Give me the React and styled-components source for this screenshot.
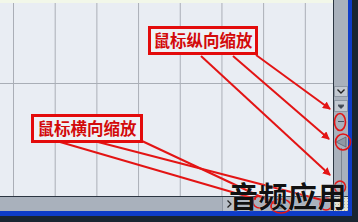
import React from "react";
import styled, { createGlobalStyle } from "styled-components";

const GlobalStyle = createGlobalStyle`
  html, body { margin: 0; padding: 0; }
  body { background: #1b2733; }
`;

const Window = styled.div`
  position: relative;
  width: 358px;
  height: 222px;
  box-sizing: border-box;
  padding: 0 6px 6px 0;
  background: #192531;
  overflow: hidden;
  font-family: "Noto Sans CJK SC", "Noto Sans", sans-serif;
`;

const Frame = styled.div`
  height: 100%;
  box-sizing: border-box;
  border-right: 4px solid #0e3cc8;
  border-bottom: 5px solid #0e3cc8;
  display: grid;
  grid-template-columns: 1fr 15px;
  grid-template-rows: 1fr 15px;
`;

const Canvas = styled.div`
  border-top: 3px solid #f2f7e9;
  background-color: #e9edf3;
  background-image:
    linear-gradient(to bottom, transparent 80px, #a9aeb6 80px, #a9aeb6 81px, transparent 81px),
    linear-gradient(to right, #aaaeb6 1px, transparent 1px);
  background-size: 100% 100%, 41.7px 100%;
  background-position: 0 0, 13px 0;
  background-repeat: no-repeat, repeat-x;
`;

const VScroll = styled.div`
  border-left: 1px solid #2c3642;
  background: #a9b1bc;
  display: flex;
  flex-direction: column;
  align-items: stretch;
  padding-top: 86px;
`;

const ScrollBtn = styled.div`
  height: ${({ h }) => h}px;
  margin-bottom: ${({ gap }) => gap || 0}px;
  background: #c3c9d1;
  border: 1px solid #8d96a2;
  box-sizing: border-box;
  display: flex;
  align-items: center;
  justify-content: center;
`;

const MinusMark = styled.div`
  height: 1px;
  width: 6px;
  margin: 9px auto 14px;
  background: #4a5360;
`;

const Track = styled.div`
  flex: 1;
  display: flex;
  flex-direction: column;
  align-items: center;
`;

const TrackLine = styled.div`
  flex: 1;
  width: 1px;
  background: #7c8591;
`;

const HScroll = styled.div`
  border-top: 1px solid #2c3642;
  background: #a9b1bc;
  display: flex;
  align-items: stretch;
  padding-left: 222px;
`;

const NavBtn = styled.div`
  width: 12px;
  background: #b9c0c9;
  border-left: 1px solid #8d96a2;
  display: flex;
  align-items: center;
  justify-content: center;
`;

const Tick = styled.div`
  width: 3px;
  margin-top: 8px;
  background: #ffffff;
`;

const Corner = styled.div`
  border-top: 1px solid #2c3642;
  border-left: 1px solid #2c3642;
  background: #e6e2d2;
  background-image: radial-gradient(#b6ad93 0.8px, transparent 1px);
  background-size: 3px 3px;
`;

const Label = styled.div`
  position: absolute;
  left: ${({ x }) => x}px;
  top: ${({ y }) => y}px;
  width: ${({ w }) => w}px;
  height: 29px;
  box-sizing: border-box;
  border: 3px solid #e30b0b;
  background: #eef1f5;
  color: #d30a0a;
  font-weight: 700;
  font-size: 16.5px;
  line-height: 23px;
  text-align: center;
  white-space: nowrap;
`;

const Watermark = styled.div`
  position: absolute;
  left: 229px;
  top: 179px;
  font-size: 29px;
  font-weight: 700;
  color: #111;
  letter-spacing: 0.5px;
  line-height: 32px;
  text-shadow: 0 0 1px #fff;
`;

const Overlay = styled.svg`
  position: absolute;
  left: 0;
  top: 0;
  pointer-events: none;
`;

const red = "#e31414";

export default function App() {
  return (
    <>
      <GlobalStyle />
      <Window>
        <Frame>
          <Canvas />
          <VScroll>
            <ScrollBtn h={11} gap={3}>
              <svg width="8" height="5" viewBox="0 0 8 5">
                <path d="M0.5 0.5 L4 4 L7.5 0.5" fill="none" stroke="#222" strokeWidth="1.4" />
              </svg>
            </ScrollBtn>
            <ScrollBtn h={12}>
              <svg width="6" height="5" viewBox="0 0 6 5">
                <path d="M0 0 H6 M0 1.5 L3 4.5 L6 1.5 Z" fill="#3c4450" stroke="#3c4450" strokeWidth="0.8" />
              </svg>
            </ScrollBtn>
            <MinusMark />
            <Track>
              <svg width="12" height="12" viewBox="0 0 12 12">
                <path d="M11 1 L1 6 L11 11 Z" fill="#8f98a4" stroke="#5c6572" strokeWidth="0.8" />
              </svg>
              <TrackLine />
            </Track>
          </VScroll>
          <HScroll>
            <NavBtn>
              <svg width="5" height="8" viewBox="0 0 5 8">
                <path d="M0.5 0.5 L4 4 L0.5 7.5" fill="none" stroke="#222" strokeWidth="1.3" />
              </svg>
            </NavBtn>
            <Tick />
          </HScroll>
          <Corner />
        </Frame>

        <Overlay width="358" height="222" viewBox="0 0 358 222">
          <defs>
            <marker id="ah" markerWidth="8" markerHeight="8" refX="7" refY="4" orient="auto" markerUnits="userSpaceOnUse">
              <path d="M0 0 L8 4 L0 8 Z" fill={red} />
            </marker>
          </defs>
          <path d="M276 209 L281 201 L286 209 Z" fill="#7d8794" />
          <g stroke={red} strokeWidth="2" fill="none">
            <line x1="201" y1="56" x2="330" y2="175" markerEnd="url(#ah)" />
            <line x1="233" y1="56" x2="329" y2="139" markerEnd="url(#ah)" />
            <line x1="256" y1="55" x2="330" y2="109" markerEnd="url(#ah)" />
            <line x1="60" y1="142" x2="256" y2="199" />
            <line x1="98" y1="142" x2="322" y2="200" />
            <line x1="142" y1="141" x2="276" y2="204" />
          </g>
          <g stroke={red} strokeWidth="1.6" fill="none">
            <ellipse cx="340" cy="122" rx="5.5" ry="8.5" />
            <ellipse cx="343" cy="142" rx="7.5" ry="8" />
            <ellipse cx="340" cy="187" rx="5.5" ry="6" />
            <ellipse cx="260" cy="202" rx="7" ry="6" />
            <ellipse cx="281" cy="206" rx="10" ry="7" />
            <ellipse cx="326" cy="204" rx="6" ry="6" />
          </g>
        </Overlay>

        <Label x={148} y={26} w={110}>鼠标纵向缩放</Label>
        <Label x={31} y={114} w={112}>鼠标横向缩放</Label>
        <Watermark>音频应用</Watermark>
      </Window>
    </>
  );
}
